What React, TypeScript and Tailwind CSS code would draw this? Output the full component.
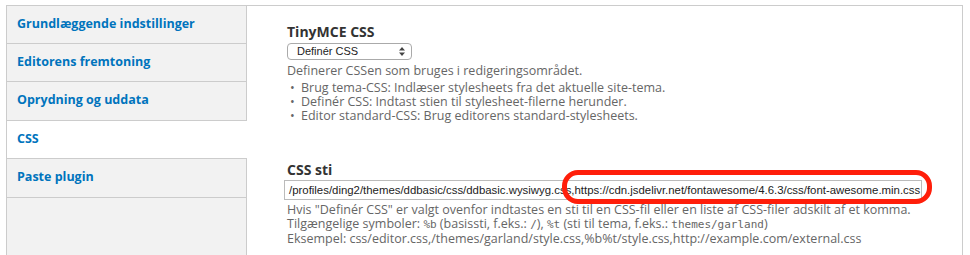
import React from 'react';

const tabs = [
  { id: 'basic', label: 'Grundlæggende indstillinger', h: 'h-[38px]' },
  { id: 'look', label: 'Editorens fremtoning', h: 'h-[38px]' },
  { id: 'cleanup', label: 'Oprydning og uddata', h: 'h-[39px]' },
  { id: 'css', label: 'CSS', h: 'h-[38px]' },
  { id: 'paste', label: 'Paste plugin', h: 'h-[39px]' },
];

const bullets = [
  'Brug tema-CSS: Indlæser stylesheets fra det aktuelle site-tema.',
  'Definér CSS: Indtast stien til stylesheet-filerne herunder.',
  'Editor standard-CSS: Brug editorens standard-stylesheets.',
];

const ui = { fontFamily: '"Open Sans", "DejaVu Sans", sans-serif' };
const helv = { fontFamily: '"Liberation Sans", Arial, sans-serif' };
const mono = { fontFamily: '"DejaVu Sans Mono", "Liberation Mono", monospace' };

export default function App() {
  const active = 'css';
  const path =
    '/profiles/ding2/themes/ddbasic/css/ddbasic.wysiwyg.css,https://cdn.jsdelivr.net/fontawesome/4.6.3/css/font-awesome.min.css';

  return (
    <div className="w-[970px] h-[255px] bg-white pl-[6px] pt-[5px] overflow-hidden" style={ui}>
      <div className="flex h-[260px]">
        {/* Vertical tabs */}
        <div className="w-[241px] flex flex-col border-l border-t border-[#cccccc]">
          {tabs.map((t) => {
            const isActive = t.id === active;
            return (
              <div
                key={t.id}
                className={`${t.h} shrink-0 border-b border-[#cccccc] pl-[10px] pt-[9px] text-[12.5px] font-bold text-[#0074bd] ${
                  isActive ? 'bg-white' : 'bg-[#f2f2f2] border-r'
                }`}
              >
                {t.label}
              </div>
            );
          })}
          <div className="flex-1 bg-[#f2f2f2] border-r border-[#cccccc]" />
        </div>

        {/* Panel */}
        <div className="w-[716px] border-t border-r border-[#cccccc] pl-[40px] pt-[18px]">
          <div className="text-[14px] font-bold text-[#333333] leading-[16px]">TinyMCE CSS</div>
          <div
            className="mt-[3px] w-[125px] h-[17px] border border-[#aaaaaa] rounded-[4px] flex items-center justify-between pl-[9px] pr-[6px] text-[11px] text-[#222222]"
            style={helv}
          >
            <span>Definér CSS</span>
            <svg width="6" height="9" viewBox="0 0 6 9">
              <path d="M3 0L6 3.5H0Z M3 9L0 5.5H6Z" fill="#444" />
            </svg>
          </div>
          <div className="mt-[4px] text-[12.5px] leading-[14px] text-[#666666]">
            <p>Definerer CSSen som bruges i redigeringsområdet.</p>
            <ul className="mt-[3px]">
              {bullets.map((b) => (
                <li key={b} className="flex">
                  <span className="w-[14px] shrink-0 pl-[3px]">•</span>
                  <span>{b}</span>
                </li>
              ))}
            </ul>
          </div>

          <div className="mt-[39px] text-[14px] font-bold text-[#333333] leading-[16px]">CSS sti</div>
          <div className="relative mt-[2px] -ml-[3px] w-[638px]">
            <div
              className="h-[20px] border border-[#bbbbbb] pl-[4px] text-[11.4px] leading-[18px] text-[#222222] whitespace-nowrap overflow-hidden"
              style={helv}
            >
              {path}
            </div>
            <div className="absolute left-[278px] top-[-10px] w-[370px] h-[34px] border-[5px] border-[#ff1e0a] rounded-[16px]" />
          </div>
          <div className="mt-[3px] text-[12.5px] leading-[14px] text-[#666666]">
            <p>Hvis "Definér CSS" er valgt ovenfor indtastes en sti til en CSS-fil eller en liste af CSS-filer adskilt af et komma.</p>
            <p>
              Tilgængelige symboler: <code className="text-[11px]" style={mono}>%b</code> (basissti, f.eks.:{' '}
              <code className="text-[11px]" style={mono}>/</code>), <code className="text-[11px]" style={mono}>%t</code> (sti
              til tema, f.eks.: <code className="text-[11px]" style={mono}>themes/garland</code>)
            </p>
            <p>Eksempel: css/editor.css,/themes/garland/style.css,%b%t/style.css,http://example.com/external.css</p>
          </div>
        </div>
      </div>
    </div>
  );
}
